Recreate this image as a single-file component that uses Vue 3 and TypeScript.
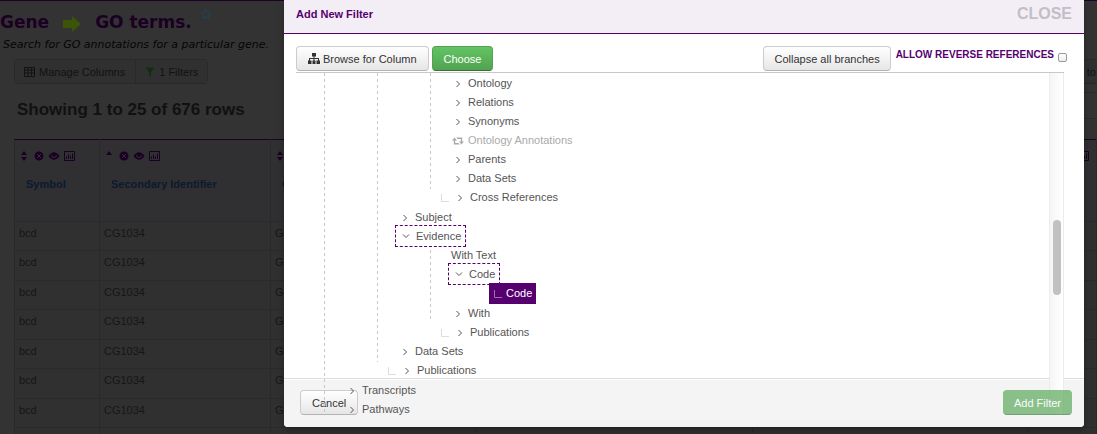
<script setup lang="ts">
import { ref } from 'vue'

interface TreeRow {
  name: string
  kind: 'closed' | 'reverse'
  last?: boolean
}

const annotationRows: TreeRow[] = [
  { name: 'Ontology', kind: 'closed' },
  { name: 'Relations', kind: 'closed' },
  { name: 'Synonyms', kind: 'closed' },
  { name: 'Ontology Annotations', kind: 'reverse' },
  { name: 'Parents', kind: 'closed' },
  { name: 'Data Sets', kind: 'closed' },
  { name: 'Cross References', kind: 'closed', last: true },
]
const evidenceTail: TreeRow[] = [
  { name: 'With', kind: 'closed' },
  { name: 'Publications', kind: 'closed', last: true },
]
const goTail: TreeRow[] = [
  { name: 'Data Sets', kind: 'closed' },
  { name: 'Publications', kind: 'closed', last: true },
]
const rootTail: TreeRow[] = [
  { name: 'Transcripts', kind: 'closed' },
  { name: 'Pathways', kind: 'closed' },
]
const resultRows = Array.from({ length: 7 }, (_, id) => ({ id, symbol: 'bcd', secondary: 'CG1034', term: 'GO' }))
const headers = ['Symbol', 'Secondary Identifier', 'GO', '', '', '']
const reverse = ref(false)
</script>

<template>
  <div class="screen">
    <main class="page">
      <h1 class="title">
        <span>Gene</span>
        <svg class="arrow" width="20" height="18" viewBox="0 0 20 18"><path d="M1 5h9V1l9 8-9 8v-4H1z" /></svg>
        <span>GO terms.</span>
        <svg class="star" width="12" height="12" viewBox="0 0 12 12"><path d="M6 1L7.500 4.300L11.100 4.700L8.400 7.100L9.200 10.700L6 8.900L2.800 10.700L3.600 7.100L.9 4.700L4.500 4.300z" /></svg>
      </h1>
      <p class="description">Search for GO annotations for a particular gene.</p>
      <div class="page-tools">
        <div class="group">
          <button type="button">
            <svg width="11" height="10" viewBox="0 0 11 10"><path d="M.5 .5h10v9H.5zM.5 3h10M.5 6h10M4 .5v9M7.5.5v9" fill="none" stroke="currentColor" /></svg>
            Manage Columns
          </button>
          <button type="button">
            <svg class="funnel" width="10" height="10" viewBox="0 0 10 10"><path d="M.5.5h9L6 5v5L4 8V5z" /></svg>
            1 Filters
          </button>
        </div>
        <div class="group pager"><button type="button">to</button></div>
      </div>
      <div class="summary">
        <h2 class="count">Showing 1 to 25 of 676 rows</h2>
        <div class="group paging"></div>
      </div>
      <table class="results">
        <thead>
          <tr>
            <th v-for="(head, i) in headers" :key="i" scope="col">
              <svg class="col-icons" width="56" height="12" viewBox="0 0 56 12">
                <path v-if="i === 1" d="M0 5l3-4 3 4z" />
                <path v-else d="M0 5l3-4 3 4zM0 7h6l-3 4z" />
                <circle cx="18" cy="6" r="4.5" />
                <path class="cut" d="M16.2 4.2l3.6 3.6m0-3.600l-3.600 3.600" />
                <path d="M27.500 6q5.500-7.500 11 0q-5.500 7.500-11 0z" />
                <path class="ring" d="M30.500 5a2.500 2.500 0 0 0 5 0" />
                <path class="line" d="M43.500 1.500h10v9h-10zM45.500 9V6.500M47.500 9V4.500M49.500 9V6M51.500 9V3.500" />
              </svg>
              <a v-if="head" href="#">{{ head }}</a>
            </th>
          </tr>
        </thead>
        <tbody>
          <tr v-for="row in resultRows" :key="row.id">
            <td>{{ row.symbol }}</td>
            <td>{{ row.secondary }}</td>
            <td>{{ row.term }}</td>
            <td></td>
            <td></td>
            <td></td>
          </tr>
          <tr><td v-for="n in 6" :key="n"></td></tr>
        </tbody>
      </table>
    </main>

    <section class="modal" role="dialog" aria-labelledby="dialog-title">
      <header class="modal-header">
        <h3 id="dialog-title">Add New Filter</h3>
        <button class="close" type="button">CLOSE</button>
      </header>
      <div class="modal-body">
        <div class="toolbar">
          <button class="btn" type="button">
            <svg width="12" height="11" viewBox="0 0 12 11"><path d="M4 0h4v3.500H6.500V5H11v2.500h1V11H8.500V7.500H10V6H6.500v1.500h1V11h-3V7.500h1V6H2v1.500h1.500V11H0V7.500h1V5h4.500V3.500H4z" /></svg>
            Browse for Column
          </button>
          <button class="btn success" type="button">Choose</button>
          <button class="btn collapse" type="button">Collapse all branches</button>
          <label class="reverse-label" for="reverse">ALLOW REVERSE REFERENCES</label>
          <input id="reverse" v-model="reverse" type="checkbox">
        </div>
        <div class="tree-frame">
          <ul class="tree">
            <li>
              <ul>
                <li>
                  <ul>
                    <li v-for="row in annotationRows" :key="row.name" :class="{ last: row.last }">
                      <a href="#" :class="{ muted: row.kind === 'reverse' }">
                        <svg v-if="row.last" class="elbow" width="8" height="8" viewBox="0 0 8 8"><path d="M.5 0v7.500H8" /></svg>
                        <svg v-if="row.kind === 'reverse'" class="retweet" width="12" height="8" viewBox="0 0 12 8"><path d="M2.500 .5L5 3.500H3.200V6H6.500L7.800 7.500H1.800V3.500H0zM4.200 .5H10.200V4.500H12L9.500 7.500L7 4.500H8.800V2H5.500z" /></svg>
                        <svg v-else class="chevron" width="6" height="8" viewBox="0 0 6 8"><path d="M1.500 1l3 3-3 3" /></svg>
                        <span>{{ row.name }}</span>
                      </a>
                    </li>
                  </ul>
                </li>
                <li>
                  <a href="#">
                    <svg class="chevron" width="6" height="8" viewBox="0 0 6 8"><path d="M1.500 1l3 3-3 3" /></svg>
                    <span>Subject</span>
                  </a>
                </li>
                <li>
                  <a href="#" class="expanded">
                    <svg class="chevron down" width="8" height="6" viewBox="0 0 8 6"><path d="M1 1.500l3 3 3-3" /></svg>
                    <span>Evidence</span>
                  </a>
                  <ul class="broken">
                    <li><a href="#"><span>With Text</span></a></li>
                    <li>
                      <a href="#" class="expanded">
                        <svg class="chevron down" width="8" height="6" viewBox="0 0 8 6"><path d="M1 1.500l3 3 3-3" /></svg>
                        <span>Code</span>
                      </a>
                      <ul class="single">
                        <li class="last">
                          <a href="#" class="selected">
                            <svg class="elbow" width="8" height="8" viewBox="0 0 8 8"><path d="M.5 0v7.500H8" /></svg>
                            <span>Code</span>
                          </a>
                        </li>
                      </ul>
                    </li>
                    <li v-for="row in evidenceTail" :key="row.name" :class="{ last: row.last }">
                      <a href="#">
                        <svg v-if="row.last" class="elbow" width="8" height="8" viewBox="0 0 8 8"><path d="M.5 0v7.500H8" /></svg>
                        <svg class="chevron" width="6" height="8" viewBox="0 0 6 8"><path d="M1.500 1l3 3-3 3" /></svg>
                        <span>{{ row.name }}</span>
                      </a>
                    </li>
                  </ul>
                </li>
                <li v-for="row in goTail" :key="row.name" :class="{ last: row.last }">
                  <a href="#">
                    <svg v-if="row.last" class="elbow" width="8" height="8" viewBox="0 0 8 8"><path d="M.5 0v7.500H8" /></svg>
                    <svg class="chevron" width="6" height="8" viewBox="0 0 6 8"><path d="M1.500 1l3 3-3 3" /></svg>
                    <span>{{ row.name }}</span>
                  </a>
                </li>
              </ul>
            </li>
            <li v-for="row in rootTail" :key="row.name">
              <a href="#">
                <svg class="chevron" width="6" height="8" viewBox="0 0 6 8"><path d="M1.500 1l3 3-3 3" /></svg>
                <span>{{ row.name }}</span>
              </a>
            </li>
          </ul>
          <div class="track"><div class="thumb"></div></div>
        </div>
      </div>
      <footer class="modal-footer">
        <button class="btn" type="button">Cancel</button>
        <button class="btn success faded" type="button">Add Filter</button>
      </footer>
    </section>
  </div>
</template>

<style>
body { margin: 0; background: #333; }
</style>

<style scoped>
* { box-sizing: border-box; }
.screen {
  position: relative;
  height: 100vh;
  overflow: hidden;
  font: 11px/18px "Liberation Sans", Arial, sans-serif;
  color: #161616;
}
button { font-family: inherit; margin: 0; }
a { color: inherit; text-decoration: none; }
svg { flex: none; fill: currentColor; }

/* Dimmed results page */
.page { border-top: 1px solid #1d0026; }
.title {
  display: flex;
  align-items: center;
  margin: 7px 0 0;
  height: 27px;
  font: bold 17px/26px "DejaVu Sans", sans-serif;
  color: #1b0024;
}
.arrow { margin: 4px 13px 0; fill: #3c5408; }
.star { align-self: flex-start; margin-left: 8px; fill: none; stroke: #1f4557; }
.description {
  margin: 0 0 0 3px;
  font: italic 11px/20px "DejaVu Sans", sans-serif;
  color: #050505;
}
.page-tools { display: flex; justify-content: space-between; margin: 4px 0 0 14px; }
.group { display: flex; border: 1px solid #292929; border-radius: 4px; }
.group button {
  display: flex;
  align-items: center;
  gap: 4px;
  height: 23px;
  padding: 0 10px 0 9px;
  border: 0;
  background: #303030;
  font-size: 11px;
  color: #121212;
}
.group button + button { border-left: 1px solid #292929; padding: 0 9px; }
.group .funnel { fill: #122d12; }
.pager { width: 48px; border-right: 0; justify-content: flex-end; border-radius: 0; }
.pager button { padding: 0 1px; }
.summary { display: flex; justify-content: space-between; align-items: flex-start; height: 55px; padding: 8px 0 0 17px; }
.count { margin: 8px 0 0; font-size: 17px; line-height: 20px; color: #111; }
.paging { width: 48px; height: 27px; border-right: 0; border-radius: 0; }
.results {
  width: calc(100% - 14px);
  margin-left: 14px;
  border-collapse: collapse;
  table-layout: fixed;
  border-top: 1px solid #1b0024;
}
.results th, .results td { border: 1px solid #2a2a2a; text-align: left; vertical-align: top; overflow: hidden; white-space: nowrap; }
.results th { height: 82px; padding: 10px 6px 0; background: #303033; color: #0b1a2e; border-top-color: #1b0024; }
.results th:nth-child(1) { width: 85px; }
.results th:nth-child(2) { width: 171px; }
.results th:nth-child(3) { width: 206px; }
.results th:nth-child(6) { width: 68px; }
.results th a { display: block; margin: 13px 0 0 5px; font-size: 11px; line-height: 18px; }
.results td { height: 29px; padding: 2px 4px 0; background: #303030; }
.results tr:nth-child(even) td { height: 30px; }
.col-icons { display: block; fill: #1b0024; }
.col-icons .cut { fill: none; stroke: #303033; }
.col-icons .ring { fill: none; stroke: #303033; }
.col-icons .line { fill: none; stroke: #1b0024; }

/* Dialog */
.modal {
  position: absolute;
  top: 0;
  left: 284px;
  right: 13px;
  background: #fff;
  border-radius: 0 0 4px 4px;
  box-shadow: 0 3px 7px rgba(0, 0, 0, .3);
}
.modal-header {
  display: flex;
  justify-content: space-between;
  align-items: flex-start;
  height: 34px;
  padding: 4px 12px;
  background: #f3eef6;
  border-bottom: 1px solid #560070;
}
.modal-header h3 { margin: 0; font-size: 11px; line-height: 20px; color: #560070; }
.close { border: 0; padding: 0; background: none; font-size: 16px; font-weight: bold; line-height: 19px; color: #c3bec5; }
.modal-body { height: 344px; padding: 12px 20px 0 12px; }
.toolbar { display: flex; align-items: flex-start; gap: 3px; height: 26px; margin-right: -3px; }
.btn {
  display: flex;
  align-items: center;
  gap: 3px;
  height: 25px;
  padding: 0 10px;
  border: 1px solid #ccc;
  border-bottom-color: #b3b3b3;
  border-radius: 4px;
  background: linear-gradient(#fff, #e6e6e6);
  font-size: 11px;
  line-height: 18px;
  white-space: nowrap;
  color: #333;
}
.success { border-color: #51a351; border-bottom-color: #387038; background: linear-gradient(#62c462, #51a351); color: #fff; }
.collapse { margin: 0 2px 0 auto; }
.reverse-label { font-size: 10px; font-weight: bold; line-height: 18px; color: #560070; }
.toolbar input {
  appearance: none;
  width: 9px;
  height: 9px;
  margin: 7px 0 0 1px;
  border: 1px solid #999;
  border-radius: 2px;
  background: linear-gradient(#fff, #eee);
}
.toolbar .btn:not(.collapse), .modal-footer .btn:not(.faded) { padding: 0 11px; }
.tree-frame {
  position: relative;
  z-index: 1;
  display: flex;
  height: 342px;
  border-top: 1px solid #c8c8c8;
}
.tree { flex: 1; }
.tree, .tree ul {
  margin: 0 0 0 28px;
  padding: 0 0 1px;
  list-style: none;
  background: repeating-linear-gradient(#c8c8c8 0 3px, transparent 3px 6px) 0 0 / 1px calc(100% - 19px) no-repeat;
}
.tree { background-size: 1px 100%; }
.tree ul { margin-left: 53px; }
.tree > li > ul > li:first-child > ul { padding-top: 1px; }
.tree .single { background: none; }
.tree .broken { padding-bottom: 0; background-position: 0 4px; background-size: 1px calc(100% - 24px); }
.tree li { min-height: 19px; }
.tree a {
  display: inline-flex;
  align-items: center;
  height: 19px;
  margin-left: 18px;
  padding: 0 3px;
  vertical-align: top;
  font-size: 11px;
  line-height: 19px;
  color: #555;
}
.tree .last > a { margin-left: 6px; }
.tree .elbow { margin: 0 4px 0 2px; fill: none; stroke: #ddd; }
.tree .chevron { margin: 0 7px 0 4px; fill: none; stroke: #555; }
.tree .down { margin: 0 6px 0 3px; }
.tree .retweet { margin: 0 4px 0 1px; }
.tree .muted { color: #aaa; }
.tree .expanded { height: 22px; margin-top: -2px; margin-bottom: -1px; padding-right: 4px; border: 1px dashed #560070; }
.tree .selected { position: relative; height: 21px; margin-top: -1px; margin-bottom: -1px; padding-right: 4px; background: #560070; color: #fff; }
.tree .selected .elbow { stroke: #9a70aa; }
.track { width: 15px; padding: 147px 3px 0; border: solid #ececec; border-width: 0 1px; background: linear-gradient(90deg, #f5f5f5, #fff); }
.thumb { width: 8px; height: 75px; border-radius: 4px; background: #c1c1c1; }
.modal-footer {
  display: flex;
  justify-content: space-between;
  align-items: flex-start;
  height: 49px;
  padding: 11px 12px 0 16px;
  border-top: 1px solid #ddd;
  border-radius: 0 0 4px 4px;
  box-shadow: inset 0 1px 0 #fff;
  background: #f4f4f4;
}
.faded { position: relative; z-index: 2; background: #51a351; opacity: .65; }
</style>
